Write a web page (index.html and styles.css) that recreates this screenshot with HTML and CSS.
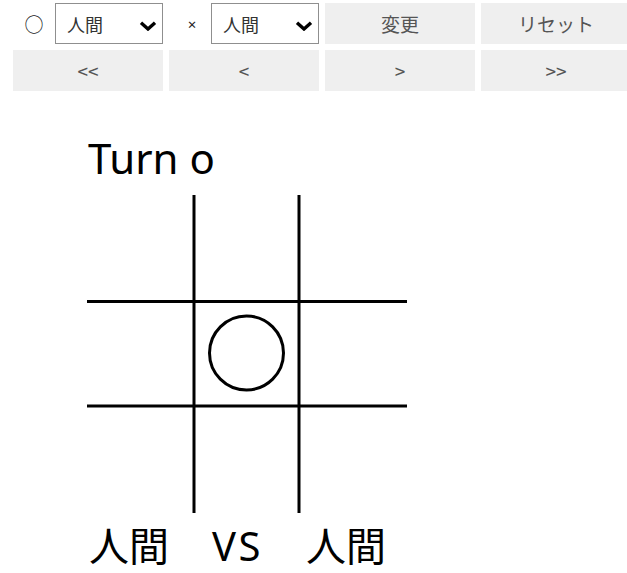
FILE: index.html
```html
<!DOCTYPE html>
<html lang="ja">
  <head>
    <meta charset="UTF-8" />
    <meta name="viewport" content="width=device-width, initial-scale=1.0" />
    <title>Tic Tac Toe</title>
    <link rel="stylesheet" href="styles.css">
  </head>
  <body>
    <div class="controls">
      <div class="player">
        <span class="mark">○</span>
        <div class="select-wrap">
          <select>
            <option>人間</option>
            <option>CPU</option>
          </select>
          <svg class="chevron" width="18" height="10" viewBox="0 0 18 10"><path d="M2 1.8 L9 8 L16 1.8" fill="none" stroke="#000" stroke-width="3.4"/></svg>
        </div>
      </div>
      <div class="player">
        <span class="mark small">×</span>
        <div class="select-wrap">
          <select>
            <option>人間</option>
            <option>CPU</option>
          </select>
          <svg class="chevron" width="18" height="10" viewBox="0 0 18 10"><path d="M2 1.8 L9 8 L16 1.8" fill="none" stroke="#000" stroke-width="3.4"/></svg>
        </div>
      </div>
      <button>変更</button>
      <button>リセット</button>
      <button>&lt;&lt;</button>
      <button>&lt;</button>
      <button>&gt;</button>
      <button>&gt;&gt;</button>
    </div>

    <div class="game">
      <h1 class="turn">Turn o</h1>
      <svg class="board" width="320" height="318" viewBox="0 0 320 318">
        <g stroke="#000" stroke-width="3" fill="none">
          <line x1="107" y1="0" x2="107" y2="318" />
          <line x1="212" y1="0" x2="212" y2="318" />
          <line x1="0" y1="106.5" x2="320" y2="106.5" />
          <line x1="0" y1="211" x2="320" y2="211" />
          <circle cx="159.5" cy="158" r="37" />
        </g>
      </svg>
      <div class="versus">
        <span>人間</span>
        <span class="vs">VS</span>
        <span>人間</span>
      </div>
    </div>
  </body>
</html>
```

FILE: styles.css
```css
html, body {
  overflow: hidden;
}

body {
  font-family: "Noto Sans", "Noto Sans CJK JP", sans-serif;
  margin: 0;
  padding: 0;
  background-color: #fff;
  color: #000;
}

.controls {
  display: grid;
  grid-template-columns: repeat(4, 150px);
  grid-auto-rows: 41px;
  gap: 6px;
  padding: 3px 0 0 13px;
}

.player {
  display: flex;
  align-items: stretch;
}

.mark {
  width: 42px;
  display: flex;
  align-items: center;
  justify-content: center;
  font-size: 19px;
  color: #222;
}

.mark.small {
  font-size: 15px;
  box-sizing: border-box;
  padding-left: 4px;
}

.select-wrap {
  position: relative;
  width: 108px;
}

select {
  appearance: none;
  -webkit-appearance: none;
  width: 100%;
  height: 100%;
  border: 1px solid #8f8f8f;
  border-radius: 0;
  background: #fff;
  font-family: "Noto Sans CJK JP", sans-serif;
  font-size: 18px;
  color: #333;
  padding: 0 0 0 11px;
  outline: none;
}

.chevron {
  position: absolute;
  right: 6px;
  top: 18px;
  pointer-events: none;
}

button {
  border: none;
  border-radius: 0;
  background-color: #efefef;
  color: #555;
  font-family: "Noto Sans CJK JP", sans-serif;
  font-size: 19px;
  padding: 0;
  cursor: pointer;
}

.game {
  margin-left: 87px;
}

.turn {
  font-weight: normal;
  font-size: 42px;
  line-height: 54px;
  margin: 40px 0 10px 1px;
}

.board {
  display: block;
}

.versus {
  display: flex;
  gap: 43px;
  font-size: 40px;
  line-height: 44px;
  margin: 11px 0 0 2px;
}

.vs {
  letter-spacing: 2.5px;
}
```
